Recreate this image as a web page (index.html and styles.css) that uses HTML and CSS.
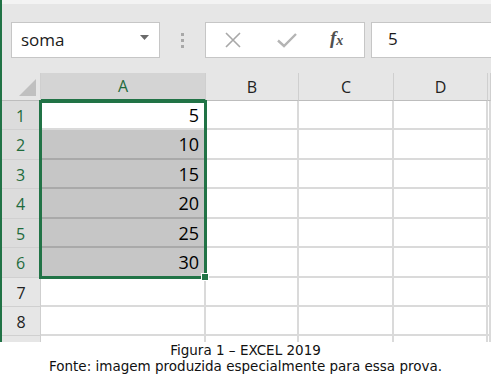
FILE: index.html
```html
<!DOCTYPE html>
<html>

<head>
    <meta name="viewport" content="width=device-width, initial-scale=1">
    <meta charset="utf-8">
    <link rel="stylesheet" href="styles.css">
</head>

<body>

    <div class="window">
        <div class="toolbar">
            <div class="namebox">
                <span>soma</span>
                <svg class="arrow" width="9" height="5" viewBox="0 0 9 5"><path d="M0 0h9L4.5 5z" fill="#6a6a6a"/></svg>
            </div>
            <div class="dots">
                <i></i><i></i><i></i>
            </div>
            <div class="buttons">
                <svg class="btn" width="16" height="16" viewBox="0 0 16 16"><path d="M1 1L15 15M15 1L1 15" stroke="#a8a8a8" stroke-width="1.6" fill="none"/></svg>
                <svg class="btn" width="20" height="16" viewBox="0 0 20 16"><path d="M1 8.5L7 14L19 2" stroke="#b4b4b4" stroke-width="2.4" fill="none"/></svg>
                <span class="fx">f<sub>x</sub></span>
            </div>
            <div class="formula">5</div>
        </div>

        <div class="grid">
            <div class="corner"><i></i></div>
            <div class="colhead sel">A</div>
            <div class="colhead">B</div>
            <div class="colhead">C</div>
            <div class="colhead">D</div>
            <div class="colhead"></div>

            <div class="rowhead sel">1</div>
            <div class="cell num">5</div>
            <div class="cell"></div><div class="cell"></div><div class="cell"></div><div class="cell"></div>

            <div class="rowhead sel">2</div>
            <div class="cell num hl">10</div>
            <div class="cell"></div><div class="cell"></div><div class="cell"></div><div class="cell"></div>

            <div class="rowhead sel">3</div>
            <div class="cell num hl">15</div>
            <div class="cell"></div><div class="cell"></div><div class="cell"></div><div class="cell"></div>

            <div class="rowhead sel">4</div>
            <div class="cell num hl">20</div>
            <div class="cell"></div><div class="cell"></div><div class="cell"></div><div class="cell"></div>

            <div class="rowhead sel">5</div>
            <div class="cell num hl">25</div>
            <div class="cell"></div><div class="cell"></div><div class="cell"></div><div class="cell"></div>

            <div class="rowhead sel">6</div>
            <div class="cell num hl">30</div>
            <div class="cell"></div><div class="cell"></div><div class="cell"></div><div class="cell"></div>

            <div class="rowhead">7</div>
            <div class="cell"></div>
            <div class="cell"></div><div class="cell"></div><div class="cell"></div><div class="cell"></div>

            <div class="rowhead">8</div>
            <div class="cell"></div>
            <div class="cell"></div><div class="cell"></div><div class="cell"></div><div class="cell"></div>

            <div class="rowhead"></div>
            <div class="cell"></div>
            <div class="cell"></div><div class="cell"></div><div class="cell"></div><div class="cell"></div>

            <div class="selection"></div>
            <div class="handle"></div>
        </div>
    </div>

    <div class="caption">
        <p>Figura 1 – EXCEL 2019</p>
        <p>Fonte: imagem produzida especialmente para essa prova.</p>
    </div>

</body>

</html>
```

FILE: styles.css
```css
* {
    box-sizing: border-box;
}

body {
    margin: 0;
    width: 491px;
    background: #fff;
    font-family: "Open Sans", "Noto Sans", sans-serif;
}

.window {
    border-left: 2px solid #217346;
    height: 342px;
    overflow: hidden;
}

.toolbar {
    height: 73px;
    background: #e6e6e6;
    border-top: 4px solid #f3f3f3;
    display: flex;
    align-items: flex-start;
    padding-top: 18px;
    padding-left: 9px;
}

.namebox {
    width: 149px;
    height: 36px;
    background: #fff;
    border: 1px solid #c6c6c6;
    display: flex;
    align-items: center;
    justify-content: space-between;
    padding: 0 10px 2px 9px;
    font-size: 17px;
    color: #1a1a1a;
}

.namebox .arrow {
    margin-top: -3px;
}

.dots {
    width: 45px;
    height: 36px;
    display: flex;
    flex-direction: column;
    align-items: center;
    justify-content: center;
    gap: 3px;
}

.dots i {
    width: 3px;
    height: 3px;
    background: #a8a8a8;
}

.buttons {
    width: 160px;
    height: 36px;
    background: #fff;
    border: 1px solid #c6c6c6;
    display: flex;
    align-items: center;
    padding-left: 19px;
}

.buttons .btn + .btn {
    margin-left: 36px;
}

.fx {
    margin-left: 33px;
    font-family: "Liberation Serif", serif;
    font-style: italic;
    font-weight: bold;
    font-size: 19px;
    color: #505050;
    margin-top: -4px;
}

.fx sub {
    font-size: 14px;
    vertical-align: -1px;
    margin-left: 0;
}

.formula {
    flex: 1;
    height: 36px;
    margin-left: 6px;
    background: #fff;
    border: 1px solid #c6c6c6;
    border-right: none;
    padding: 4px 0 0 16px;
    font-size: 17px;
    color: #1a1a1a;
}

.grid {
    position: relative;
    display: grid;
    grid-template-columns: 39px 165px 93px 95px 94px 1fr;
    grid-template-rows: 28px 29px 30px 29px 30px 29px 30px 29px 29px 8px;
    background: #fff;
}

.corner,
.colhead,
.rowhead {
    background: #e6e6e6;
    border-right: 1px solid #cfcfcf;
    border-bottom: 1px solid #bdbdbd;
    color: #222;
    font-size: 16px;
    display: flex;
    align-items: center;
    justify-content: center;
}

.corner {
    position: relative;
}

.corner i {
    position: absolute;
    right: 4px;
    bottom: 4px;
    width: 0;
    height: 0;
    border-left: 17px solid transparent;
    border-bottom: 17px solid #c0c0c0;
}

.colhead.sel {
    background: #d4d4d4;
    color: #1e6b3c;
    border-bottom: 2px solid #217346;
}

.rowhead {
    border-bottom-color: #d0d0d0;
    padding-top: 1px;
    font-size: 16px;
}

.rowhead.sel {
    background: #dcdcdc;
    color: #1e6b3c;
    border-right: 2px solid #217346;
}

.cell {
    border-right: 2px solid #dadada;
    border-bottom: 2px solid #dadada;
}

.num {
    text-align: right;
    padding: 2px 5px 0 0;
    font-size: 18px;
    color: #000;
}

.hl {
    background: #c6c6c6;
    border-bottom-color: #a9a9a9;
}

.selection {
    position: absolute;
    left: 37px;
    top: 27px;
    width: 168px;
    height: 179px;
    border: 3px solid #217346;
    pointer-events: none;
}

.handle {
    position: absolute;
    left: 199px;
    top: 200px;
    width: 8px;
    height: 8px;
    background: #217346;
    border: 1px solid #fff;
}

.caption {
    text-align: center;
    font-family: "DejaVu Sans", Verdana, sans-serif;
    font-size: 13.5px;
    color: #111;
    line-height: 16px;
    margin-top: 0;
}

.caption p {
    margin: 0;
}
```
